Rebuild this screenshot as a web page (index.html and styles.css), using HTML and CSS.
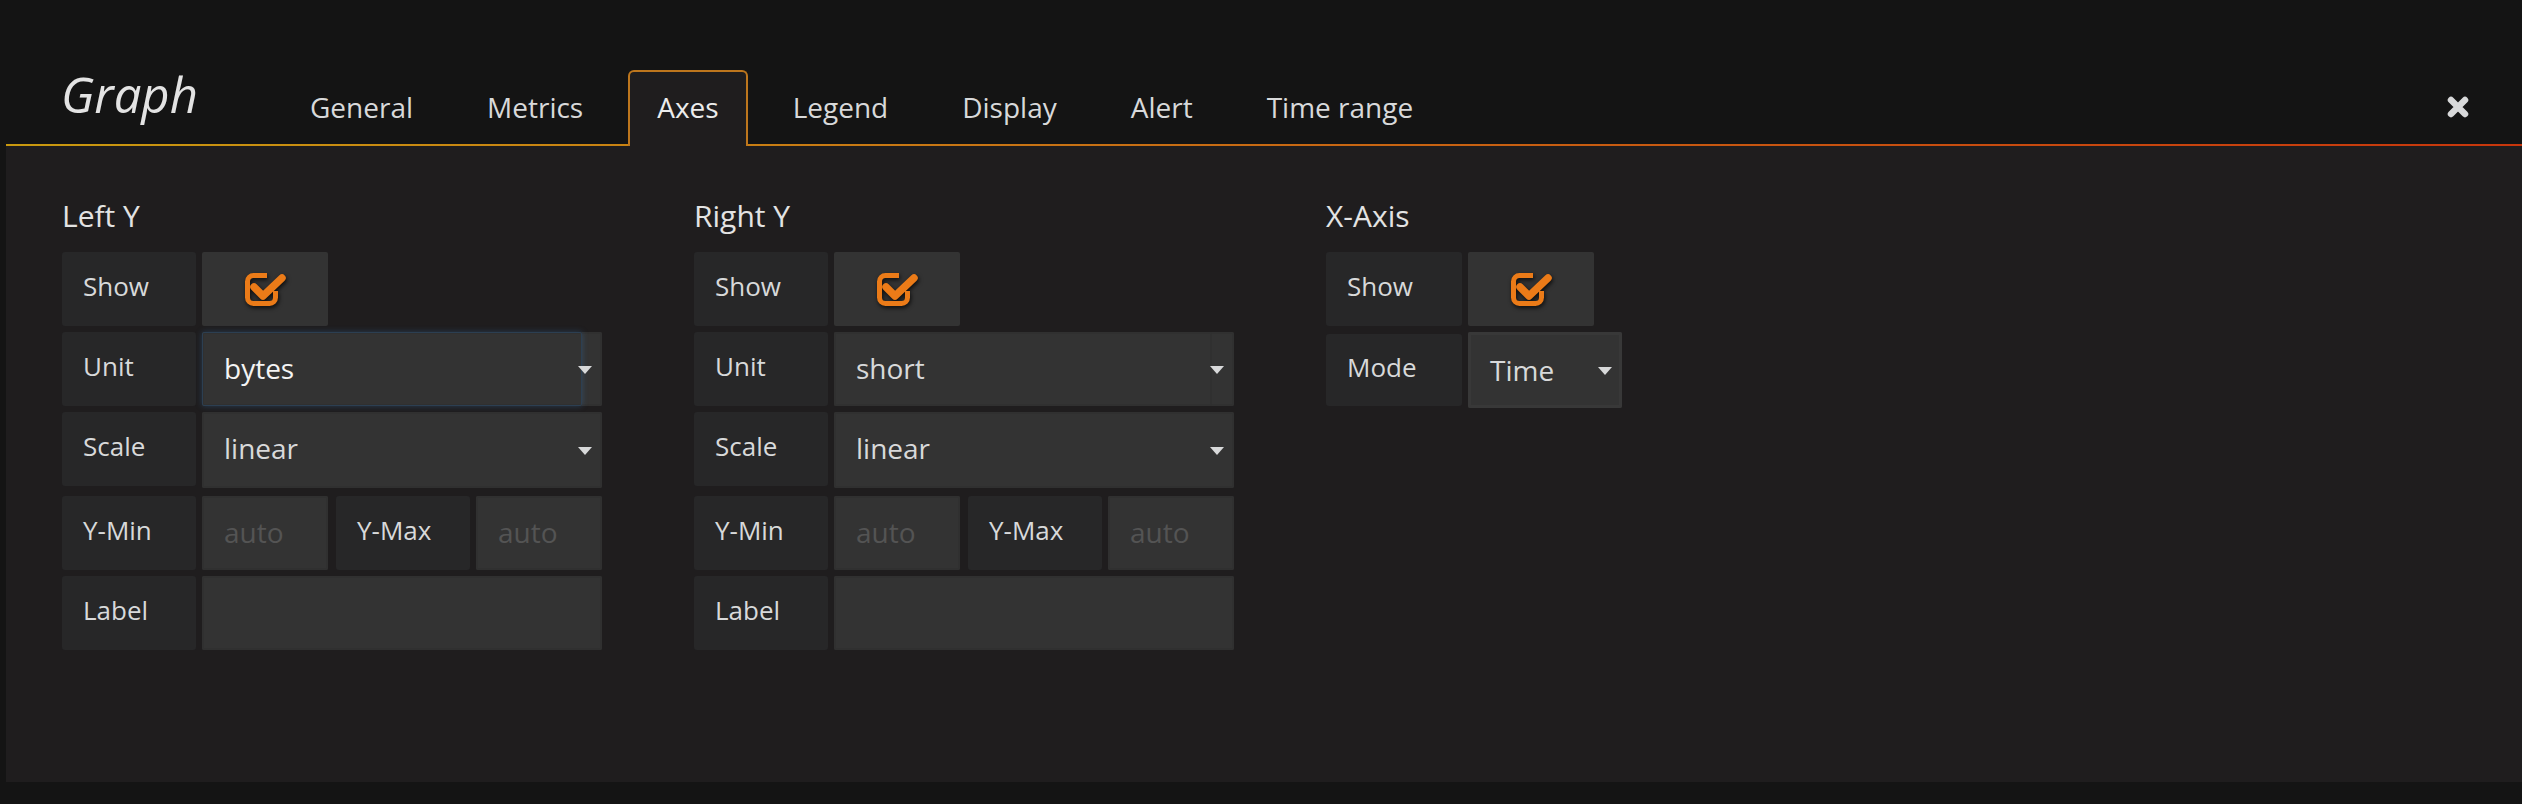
FILE: index.html
```html
<!DOCTYPE html>
<html lang="en">
<head>
<meta charset="utf-8">
<title>Graph - Axes</title>
<link rel="stylesheet" href="styles.css">
</head>
<body>
<div class="editor">
  <header class="header">
    <h1 class="title">Graph</h1>
    <ul class="tabs">
      <li class="tab">General</li>
      <li class="tab">Metrics</li>
      <li class="tab active">Axes</li>
      <li class="tab">Legend</li>
      <li class="tab">Display</li>
      <li class="tab">Alert</li>
      <li class="tab">Time range</li>
    </ul>
    <button class="close" aria-label="Close">
      <svg width="22" height="22" viewBox="0 0 22 22"><path d="M4 4 L18 18 M18 4 L4 18" stroke="#d8d9da" stroke-width="6.5" stroke-linecap="round" fill="none"/></svg>
    </button>
  </header>

  <main class="panel">
    <section class="section">
      <h5 class="section-title">Left Y</h5>
      <div class="row">
        <span class="label">Show</span>
        <span class="check-cell">
          <svg class="check" width="44" height="40" viewBox="0 0 44 40"><path d="M24 5.5 H10.5 A6 6 0 0 0 4.5 11.5 V27.5 A6 6 0 0 0 10.5 33.5 H26.5 A6 6 0 0 0 32.5 27.5 V21" stroke="#eb7b18" stroke-width="5" fill="none"/><path d="M11 17 L20 26 L39 8" stroke="#eb7b18" stroke-width="7.5" stroke-linejoin="round" stroke-linecap="round" fill="none"/></svg>
        </span>
      </div>
      <div class="row">
        <span class="label">Unit</span>
        <span class="select wide">
          <span class="inner focused">bytes</span>
          <i class="caret"></i>
        </span>
      </div>
      <div class="row tall">
        <span class="label">Scale</span>
        <span class="select wide"><span class="value">linear</span><i class="caret"></i></span>
      </div>
      <div class="row">
        <span class="label">Y-Min</span>
        <span class="input small placeholder">auto</span>
        <span class="label second">Y-Max</span>
        <span class="input small placeholder">auto</span>
      </div>
      <div class="row">
        <span class="label">Label</span>
        <span class="input wide"></span>
      </div>
    </section>

    <section class="section">
      <h5 class="section-title">Right Y</h5>
      <div class="row">
        <span class="label">Show</span>
        <span class="check-cell">
          <svg class="check" width="44" height="40" viewBox="0 0 44 40"><path d="M24 5.5 H10.5 A6 6 0 0 0 4.5 11.5 V27.5 A6 6 0 0 0 10.5 33.5 H26.5 A6 6 0 0 0 32.5 27.5 V21" stroke="#eb7b18" stroke-width="5" fill="none"/><path d="M11 17 L20 26 L39 8" stroke="#eb7b18" stroke-width="7.5" stroke-linejoin="round" stroke-linecap="round" fill="none"/></svg>
        </span>
      </div>
      <div class="row">
        <span class="label">Unit</span>
        <span class="select wide">
          <span class="inner">short</span>
          <i class="caret"></i>
        </span>
      </div>
      <div class="row tall">
        <span class="label">Scale</span>
        <span class="select wide"><span class="value">linear</span><i class="caret"></i></span>
      </div>
      <div class="row">
        <span class="label">Y-Min</span>
        <span class="input small placeholder">auto</span>
        <span class="label second">Y-Max</span>
        <span class="input small placeholder">auto</span>
      </div>
      <div class="row">
        <span class="label">Label</span>
        <span class="input wide"></span>
      </div>
    </section>

    <section class="section xaxis">
      <h5 class="section-title">X-Axis</h5>
      <div class="row">
        <span class="label">Show</span>
        <span class="check-cell">
          <svg class="check" width="44" height="40" viewBox="0 0 44 40"><path d="M24 5.5 H10.5 A6 6 0 0 0 4.5 11.5 V27.5 A6 6 0 0 0 10.5 33.5 H26.5 A6 6 0 0 0 32.5 27.5 V21" stroke="#eb7b18" stroke-width="5" fill="none"/><path d="M11 17 L20 26 L39 8" stroke="#eb7b18" stroke-width="7.5" stroke-linejoin="round" stroke-linecap="round" fill="none"/></svg>
        </span>
      </div>
      <div class="row mode-row">
        <span class="label">Mode</span>
        <span class="select mode"><span class="value">Time</span><i class="caret"></i></span>
      </div>
    </section>
  </main>
</div>
</body>
</html>
```

FILE: styles.css
```css
* { box-sizing: border-box; }

html, body {
  margin: 0;
  padding: 0;
  background: #141414;
  color: #d8d9da;
  font-family: "Open Sans", "Noto Sans", "Liberation Sans", sans-serif;
  width: 2522px;
  height: 804px;
  overflow: hidden;
}

.editor {
  margin-left: 6px;
}

/* ---------- header ---------- */
.header {
  height: 146px;
  display: flex;
  align-items: flex-start;
  background: linear-gradient(to right, #c9990f 0%, #c87414 40%, #c8360c 100%) left bottom / 100% 2px no-repeat;
}

.title {
  margin: 64px 0 0 55px;
  width: 220px;
  font-size: 49px;
  line-height: 60px;
  font-style: italic;
  font-weight: 400;
  color: #e3e3e3;
}

.tabs {
  list-style: none;
  margin: 70px 0 0 0;
  padding: 0;
  display: flex;
  gap: 16px;
}

.tab {
  height: 76px;
  padding: 15px 27px 0;
  border: 2px solid transparent;
  border-bottom: none;
  border-radius: 6px 6px 0 0;
  font-size: 28px;
  line-height: 40px;
  color: #d8d9da;
  white-space: nowrap;
}

.tab.active {
  background: #1f1d1e;
  border-color: #bd761d;
  color: #ececec;
}

.close {
  margin: 96px 53px 0 auto;
  padding: 0;
  width: 22px;
  height: 22px;
  border: 0;
  background: none;
  display: block;
}
.close svg { display: block; }

/* ---------- panel ---------- */
.panel {
  height: 636px;
  background: #1f1d1e;
  padding: 52px 0 0 56px;
  display: grid;
  grid-template-columns: 540px 540px 540px;
  column-gap: 92px;
  align-items: start;
}

.section-title {
  margin: 0 0 18px;
  font-size: 30px;
  line-height: 36px;
  font-weight: 400;
  color: #e3e3e3;
}

.row {
  display: flex;
  gap: 6px;
  height: 74px;
  margin-bottom: 6px;
}
.row.tall {
  height: 76px;
  margin-bottom: 8px;
}

.label {
  width: 134px;
  flex: none;
  height: 74px;
  background: #272728;
  border-radius: 3px;
  padding: 0 0 6px 21px;
  font-size: 26px;
  line-height: 68px;
  color: #d8d9da;
}
.label.second { margin-left: 2px; }
.xaxis .label { width: 136px; }

.check-cell {
  width: 126px;
  height: 74px;
  background: #333333;
  border-radius: 2px;
  display: flex;
  align-items: center;
  justify-content: center;
  padding-top: 2px;
}
.check {
  display: block;
  filter: drop-shadow(1px 2px 2px rgba(0, 0, 0, 0.75));
}

.select,
.input {
  position: relative;
  height: 100%;
  background: #333333;
  border-radius: 2px;
  font-size: 28px;
  line-height: 72px;
  color: #d8d9da;
  box-shadow: inset 0 0 0 2px #303030;
}

.wide { width: 400px; }
.small { width: 126px; padding-left: 22px; }
.placeholder { color: #545454; }

.select .value {
  display: block;
  padding-left: 22px;
}

.select .inner {
  display: block;
  width: calc(100% - 22px);
  height: 100%;
  padding-left: 22px;
  box-shadow: inset 0 0 0 2px #303030;
  border-radius: 2px;
}

.select .inner.focused {
  width: calc(100% - 20px);
  color: #f4f4f4;
  border: 1px solid #2c3f52;
  padding-left: 21px;
  line-height: 70px;
  box-shadow: 0 0 6px rgba(60, 120, 180, 0.35);
}

.caret {
  position: absolute;
  right: 10px;
  top: 50%;
  margin-top: -3px;
  width: 0;
  height: 0;
  border-left: 7px solid transparent;
  border-right: 7px solid transparent;
  border-top: 8px solid #d8d9da;
}

.mode-row { height: 76px; }
.mode-row .label { height: 72px; margin-top: 2px; line-height: 66px; }
.select.mode {
  width: 154px;
  height: 76px;
  line-height: 76px;
  box-shadow: inset 0 0 0 3px #383838;
}
```
